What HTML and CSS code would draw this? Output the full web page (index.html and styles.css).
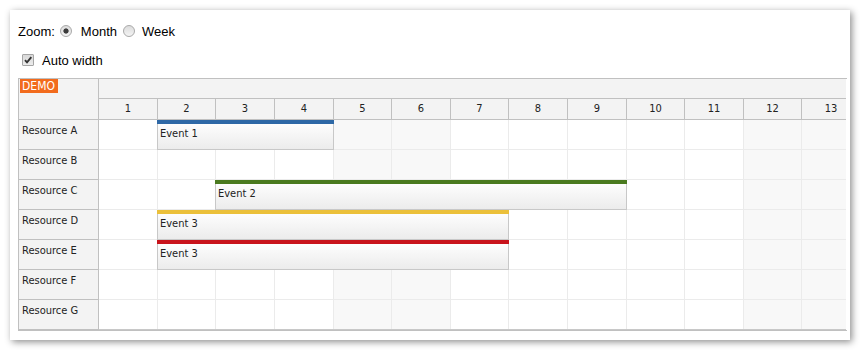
FILE: index.html
```html
<!DOCTYPE html>
<html>
<head>
<meta charset="utf-8">
<link rel="stylesheet" href="styles.css">
</head>
<body>
<div class="panel">
  <div class="toolbar">
    <span class="lbl">Zoom:</span>
    <label class="opt"><input type="radio" name="zoom" class="radio r1" checked>Month</label>
    <label class="opt"><input type="radio" name="zoom" class="radio r2">Week</label>
  </div>
  <div class="toolbar row2">
    <label class="opt"><input type="checkbox" class="check" checked>Auto width</label>
  </div>
  <div class="scheduler">
    <div class="rowheaders">
      <div class="corner"><span class="demo">DEMO</span></div>
      <div class="rh">Resource A</div>
      <div class="rh">Resource B</div>
      <div class="rh">Resource C</div>
      <div class="rh">Resource D</div>
      <div class="rh">Resource E</div>
      <div class="rh">Resource F</div>
      <div class="rh last">Resource G</div>
    </div>
    <div class="main">
      <div class="th1"></div>
      <div class="th2">
        <div class="hc">1</div><div class="hc">2</div><div class="hc">3</div><div class="hc">4</div><div class="hc">5</div><div class="hc">6</div><div class="hc">7</div><div class="hc">8</div><div class="hc">9</div><div class="hc">10</div><div class="hc">11</div><div class="hc">12</div><div class="hc">13</div>
      </div>
      <div class="body">
        <div class="row"><div class="c"></div><div class="c"></div><div class="c"></div><div class="c"></div><div class="c we"></div><div class="c we"></div><div class="c"></div><div class="c"></div><div class="c"></div><div class="c"></div><div class="c"></div><div class="c we"></div><div class="c we"></div></div>
        <div class="row"><div class="c"></div><div class="c"></div><div class="c"></div><div class="c"></div><div class="c we"></div><div class="c we"></div><div class="c"></div><div class="c"></div><div class="c"></div><div class="c"></div><div class="c"></div><div class="c we"></div><div class="c we"></div></div>
        <div class="row"><div class="c"></div><div class="c"></div><div class="c"></div><div class="c"></div><div class="c we"></div><div class="c we"></div><div class="c"></div><div class="c"></div><div class="c"></div><div class="c"></div><div class="c"></div><div class="c we"></div><div class="c we"></div></div>
        <div class="row"><div class="c"></div><div class="c"></div><div class="c"></div><div class="c"></div><div class="c we"></div><div class="c we"></div><div class="c"></div><div class="c"></div><div class="c"></div><div class="c"></div><div class="c"></div><div class="c we"></div><div class="c we"></div></div>
        <div class="row"><div class="c"></div><div class="c"></div><div class="c"></div><div class="c"></div><div class="c we"></div><div class="c we"></div><div class="c"></div><div class="c"></div><div class="c"></div><div class="c"></div><div class="c"></div><div class="c we"></div><div class="c we"></div></div>
        <div class="row"><div class="c"></div><div class="c"></div><div class="c"></div><div class="c"></div><div class="c we"></div><div class="c we"></div><div class="c"></div><div class="c"></div><div class="c"></div><div class="c"></div><div class="c"></div><div class="c we"></div><div class="c we"></div></div>
        <div class="row last"><div class="c"></div><div class="c"></div><div class="c"></div><div class="c"></div><div class="c we"></div><div class="c we"></div><div class="c"></div><div class="c"></div><div class="c"></div><div class="c"></div><div class="c"></div><div class="c we"></div><div class="c we"></div></div>

        <div class="event ev-blue" style="left:58px;top:0px;width:177px">Event 1</div>
        <div class="event ev-green" style="left:116px;top:60px;width:412px">Event 2</div>
        <div class="event ev-yellow" style="left:58px;top:90px;width:352px">Event 3</div>
        <div class="event ev-red" style="left:58px;top:120px;width:352px">Event 3</div>
      </div>
    </div>
  </div>
</div>
</body>
</html>
```
FILE: styles.css
```css
html, body {
  margin: 0;
  background: #fff;
}
body {
  font-family: "Liberation Sans", Arial, sans-serif;
}
.panel {
  margin: 10px;
  width: 840px;
  height: 330px;
  box-sizing: border-box;
  padding: 11px 0 0 8px;
  background: #fff;
  box-shadow: 2px 2px 7px rgba(0, 0, 0, 0.45);
  overflow: hidden;
}
.toolbar {
  display: flex;
  align-items: center;
  height: 20px;
  font-size: 13px;
  color: #000;
}
.toolbar.row2 {
  margin-top: 9px;
}
.opt {
  display: flex;
  align-items: center;
}
.radio {
  appearance: none;
  -webkit-appearance: none;
  width: 12px;
  height: 12px;
  margin: 0;
  border-radius: 50%;
  border: 1px solid #a9a9a9;
  box-sizing: border-box;
  background: linear-gradient(#dcdcdc, #f4f4f4);
}
.radio:checked {
  background: radial-gradient(circle, #3c3c3c 0 2.2px, rgba(60,60,60,0) 3px), linear-gradient(#dcdcdc, #f4f4f4);
}
.r1 {
  margin-left: 5px;
  margin-right: 9px;
}
.r2 {
  margin-left: 6px;
  margin-right: 7px;
}
.check {
  appearance: none;
  -webkit-appearance: none;
  width: 12px;
  height: 12px;
  margin: 0 8px 0 4px;
  box-sizing: border-box;
  border: 1px solid #a5a5a5;
  border-radius: 1px;
  background: linear-gradient(#d8d8d8, #ececec);
}
.check:checked {
  background: url("data:image/svg+xml,%3Csvg xmlns='http://www.w3.org/2000/svg' width='10' height='10' viewBox='0 0 10 10'%3E%3Cpath d='M2 5.2 L4 7.4 L8.3 2.2' fill='none' stroke='%23333' stroke-width='1.9'/%3E%3C/svg%3E") no-repeat center, linear-gradient(#d8d8d8, #ececec);
}

.scheduler {
  margin-top: 8px;
  display: flex;
  width: 828px;
  border-top: 1px solid #c0c0c0;
  border-left: 1px solid #c0c0c0;
  border-bottom: 1px solid #c0c0c0;
  font-family: "DejaVu Sans Condensed", "DejaVu Sans", sans-serif;
  font-stretch: condensed;
  font-size: 11px;
  color: #222;
}
.rowheaders {
  flex: none;
  width: 80px;
  box-sizing: border-box;
  border-right: 1px solid #c0c0c0;
  background: #f3f3f3;
}
.corner {
  height: 41px;
  box-sizing: border-box;
  border-bottom: 1px solid #c0c0c0;
  padding: 0 0 0 1px;
}
.demo {
  display: inline-block;
  background: #f26b1d;
  color: #fff;
  font-size: 12px;
  height: 14px;
  line-height: 14px;
  padding: 0 3px 0 2px;
}
.rh {
  height: 30px;
  box-sizing: border-box;
  border-bottom: 1px solid #c0c0c0;
  padding: 4px 0 0 3px;
}
.main {
  flex: none;
  width: 747px;
  overflow: hidden;
}
.th1 {
  height: 20px;
  box-sizing: border-box;
  border-bottom: 1px solid #c0c0c0;
  background: #f3f3f3;
}
.th2, .row {
  display: grid;
  grid-template-columns: 59px 58px 59px 59px 58px 59px 58px 59px 59px 58px 59px 58px 59px;
}
.th2 {
  height: 21px;
  box-sizing: border-box;
  border-bottom: 1px solid #c0c0c0;
  background: #f3f3f3;
}
.hc {
  border-right: 1px solid #c0c0c0;
  display: flex;
  align-items: center;
  justify-content: center;
  padding-bottom: 2px;
}
.body {
  position: relative;
}
.row {
  height: 30px;
  box-sizing: border-box;
  border-bottom: 1px solid #ebebeb;
}
.row.last {
  border-bottom-color: #c8c8c8;
}
.c {
  border-right: 1px solid #ebebeb;
}
.we {
  background: #f8f8f8;
}
.event {
  position: absolute;
  height: 30px;
  box-sizing: border-box;
  border-top: 4px solid #2e6aa6;
  background: linear-gradient(#fdfdfd, #ebebeb);
  box-shadow: inset 1px 0 #c8c8c8, inset -1px 0 #c8c8c8, inset 0 -1px #c8c8c8;
  padding: 3px 0 0 3px;
  white-space: nowrap;
  overflow: hidden;
}
.ev-blue { border-top-color: #2e68a6; }
.ev-green { border-top-color: #4a7a1f; }
.ev-yellow { border-top-color: #ebc03a; }
.ev-red { border-top-color: #c8131b; }
```
